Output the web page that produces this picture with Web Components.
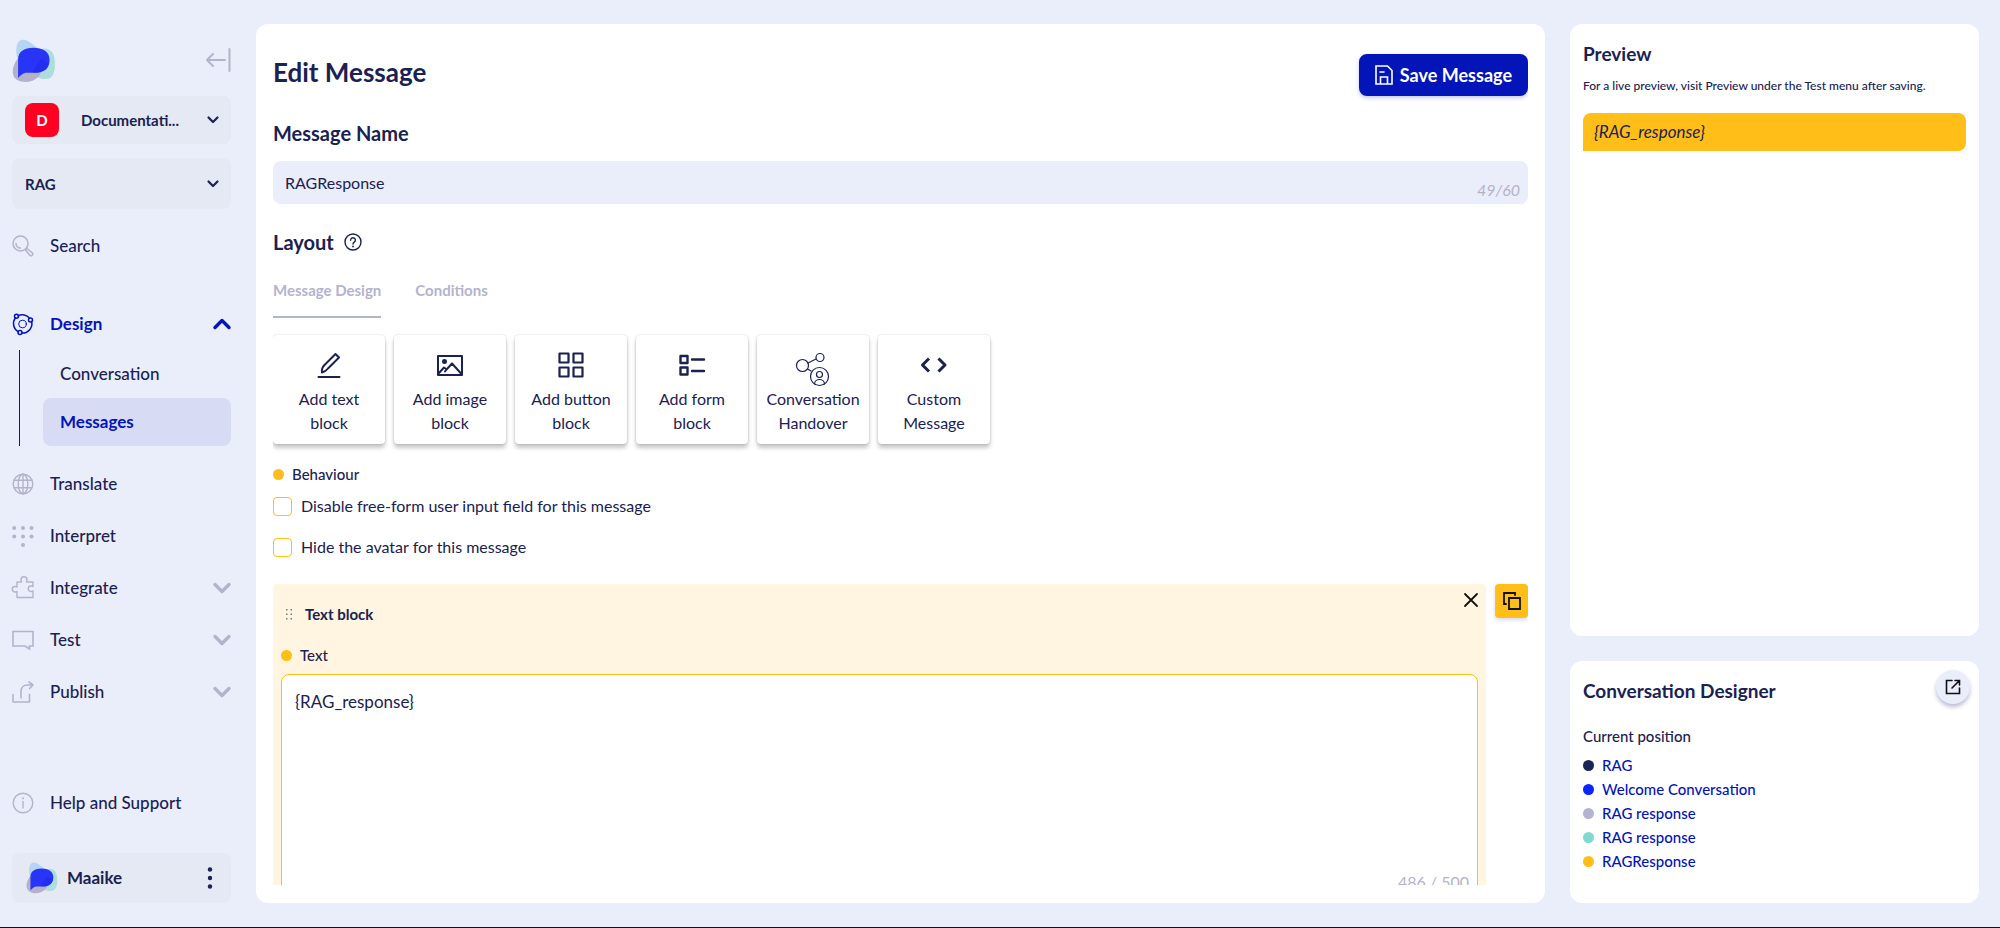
<!DOCTYPE html>
<html lang="en">
<head>
<meta charset="utf-8">
<title>Edit Message</title>
<style>
	:root {
		--page: #eaedfa;
		--field: #e4e9f3;
		--ink: #1b2150;
		--blue: #0314b8;
		--muted: #b4b3cc;
		--yellow: #ffbe18;
		--cream: #fff5e0;
	}

	body {
		margin: 0;
		background: var(--page);
		color: var(--ink);
		font: 500 16px/24px Lato, "Noto Sans", sans-serif;
	}
</style>
</head>
<body>
<message-editor></message-editor>

<script>
(function () {
	const define = (name, html) => {
		const template = document.createElement('template');
		template.innerHTML = html;

		window.customElements.define(name, class extends HTMLElement {
			constructor() {
				super();
				this.attachShadow({ mode: 'open' }).appendChild(template.content.cloneNode(true));
			}
		});
	};

	// name: [width, height, markup]
	const icons = {
		collapse: [26, 24, '<g stroke-width="2"><path d="M20 12H2M8 6l-6 6 6 6"/><path d="M24.500 1v22"/></g>'],
		down: [12, 8, '<path stroke-width="2.200" d="M1.500 1.500L6 6l4.500-4.500"/>'],
		chevron: [18, 12, '<path stroke-width="3.400" d="M2 2.500l7 7 7-7"/>'],
		search: [22, 22, '<g stroke-width="1.500"><circle cx="8.500" cy="8.500" r="7.500"/><path d="M4 8.500c0 2.500 2 4.500 4.500 4.500M13.500 15l1.500-1.500 5.500 4.500c1 1.500-1 3.500-2.500 2.500z"/></g>'],
		design: [22, 22, '<g stroke-width="1.500"><path d="M6 2.800a9.300 9.300 0 0 1 11.500 2.500M19.600 8.500A9.300 9.300 0 0 1 10 20M6.500 18.800A9.300 9.300 0 0 1 3.500 4.800"/><circle cx="10.500" cy="11" r="3.800" stroke-width="1"/><circle cx="4.500" cy="3.300" r="2"/><circle cx="18.500" cy="7" r="2"/><circle cx="8" cy="19.500" r="2"/></g>'],
		globe: [22, 22, '<g stroke-width="1.400"><circle cx="11" cy="11" r="9.800"/><ellipse cx="11" cy="11" rx="4.800" ry="9.800"/><path d="M11 1v20M2.500 7.200h17M2.500 14.800h17"/></g>'],
		dots: [22, 22, '<g fill="currentColor" stroke="none"><circle cx="2.200" cy="3" r="2"/><circle cx="11" cy="3" r="2"/><circle cx="19.500" cy="3" r="2"/><circle cx="2.200" cy="11.500" r="2"/><circle cx="11" cy="11.500" r="2"/><circle cx="19.500" cy="11.500" r="2"/><circle cx="11" cy="20" r="2"/></g>'],
		puzzle: [22, 22, '<path stroke-width="1.400" d="M5 5h4.500c0-1-.5-1.300-.5-2.200a3 3 0 0 1 6 0c0 .9-.5 1.200-.5 2.200H21v4.500c-1 0-1.300-.5-2-.5a2.700 2.700 0 0 0 0 5.500c.8 0 1-.5 2-.5v6.500H5v-6c-1 0-1.200.5-2 .5a2.700 2.700 0 0 1 0-5.500c.8 0 1 .5 2 .5z"/>'],
		chat: [22, 22, '<path stroke-width="1.600" stroke-linejoin="miter" d="M1 2.500h20V17h-3.500v3L13 17H1z"/>'],
		publish: [22, 22, '<g stroke-width="1.600"><path d="M1 13.500V21h16.500v-7.500M9 17v-6.500c0-4 2.500-6.500 6.500-6.500H20"/><path d="M17 1l4 3-3.500 3.500"/></g>'],
		info: [22, 22, '<g stroke-width="1.400"><circle cx="11" cy="11" r="9.800"/><path d="M11 9.500V16"/><path stroke-width="2" d="M11 6.200v.1"/></g>'],
		more: [6, 24, '<g fill="currentColor" stroke="none"><circle cx="3" cy="3.500" r="2.200"/><circle cx="3" cy="12" r="2.200"/><circle cx="3" cy="20.500" r="2.200"/></g>'],
		save: [18, 20, '<g stroke-width="1.600" stroke-linejoin="miter"><path d="M1 1h11.500L17 5.500V19H1zM5.500 19v-7h7v7M5 7h4"/></g>'],
		help: [18, 18, '<g stroke-width="1.400"><circle cx="9" cy="9" r="8"/><path d="M6.600 7.200a2.400 2.400 0 1 1 3.700 2c-.9.600-1.300 1-1.300 1.900"/><path stroke-width="1.800" d="M9 13.400v.1"/></g>'],
		pencil: [32, 32, '<g stroke-width="2"><path d="M5.500 28h21M9 23.500c-.5-3 .5-5.500 2.500-7.500l11-11 3.500 3.500-11 11c-2 2.500-4 3.500-6 4z"/></g>'],
		image: [32, 32, '<g stroke-width="2"><path d="M4 7h24v19H4z"/><path d="M5 24l5-5.500 2.500 2 5.500-6L27.500 25M12.500 20.500l-1.500 2"/><circle cx="10.500" cy="12.500" r="1.500" fill="currentColor"/></g>'],
		grid: [32, 32, '<g stroke-width="2.200"><path d="M4.500 4.500h9v9h-9zM18.500 4.500h9v9h-9zM4.500 18.500h9v9h-9zM18.500 18.500h9v9h-9z"/></g>'],
		form: [32, 32, '<g stroke-width="2.400"><path d="M4.500 7h7v7h-7zM4.500 18.500h7v7h-7zM16 10.500h12M16 22h12"/></g>'],
		handover: [32, 32, '<g stroke-width="1.200"><circle cx="5.500" cy="16.500" r="6"/><circle cx="23" cy="8.500" r="4"/><path d="M11 14l8-4M10.500 20l3.500 2"/><circle cx="22.500" cy="27.500" r="9"/><circle cx="22.500" cy="25.500" r="3"/><path d="M17.500 35c0-6 10-6 10 0"/></g>'],
		code: [32, 32, '<path stroke-width="3" stroke-linecap="butt" d="M11 9.500L4.500 16l6.500 6.500M20.500 9.500L27 16l-6.500 6.500"/>'],
		grip: [8, 12, '<g fill="currentColor" stroke="none"><path d="M1 1h1.500v1.500H1zM5.500 1H7v1.500H5.500zM1 5.500h1.500V7H1zM5.500 5.500H7V7H5.500zM1 10h1.500v1.500H1zM5.500 10H7v1.500H5.500z"/></g>'],
		close: [14, 14, '<path stroke-width="1.800" d="M1 1l12 12M13 1L1 13"/>'],
		copy: [18, 18, '<g stroke-width="1.800" stroke-linejoin="miter"><path d="M6 6h11v11H6z"/><path d="M3 12H1V1h11v2"/></g>'],
		open: [16, 16, '<g stroke-width="1.600" stroke-linejoin="miter"><path d="M7 1.500H1.500v13h13V9M10 1.500h4.500V6M14 2L7 9"/></g>']
	};

	class AppIcon extends HTMLElement {
		constructor() {
			super();
			this._root = this.attachShadow({ mode: 'open' });
		}

		connectedCallback() {
			const [width, height, markup] = icons[this.getAttribute('name')];
			this._root.innerHTML = `
      <style>
        :host { display: inline-flex; flex: none; }
        svg { overflow: visible; fill: none; stroke: currentColor; stroke-linecap: round; stroke-linejoin: round; }
      </style>
      <svg width="${width}" height="${height}" viewBox="0 0 ${width} ${height}" aria-hidden="true">${markup}</svg>
      `;
		}
	}

	window.customElements.define('app-icon', AppIcon);

	define('brand-logo', `
    <style>
      :host { display: block; flex: none; width: 44px; height: 44px; }
      svg { display: block; width: 100%; height: 100%; }
    </style>
    <svg viewBox="0 0 130 130" aria-hidden="true">
      <path fill="#b5d5f3" d="M13 26C16-2 36-4 56 12l28 22-64 30C12 50 12 38 13 26z"/>
      <path fill="#aedde0" d="M90 28c26-2 36 14 37 42 1 30-7 48-27 48-20 1-34-10-40-20z"/>
      <path fill="#b3b2ca" d="M16 58C4 76-2 96 5 110c9 18 35 20 55 13 14-5 24-16 26-25z"/>
      <path fill="#2935f6" d="M18 115V60c0-22 18-34 44-34 30 0 49 12 49 36 0 26-17 38-43 38H44c-12 0-18 8-26 15z"/>
      <path fill="#1a23e0" opacity=".4" d="M60 98l26-40 22 14c-4 18-18 28-40 28z"/>
    </svg>
  `);

	class PickerField extends HTMLElement {
		constructor() {
			super();
			this._root = this.attachShadow({ mode: 'open' });
		}

		connectedCallback() {
			this._root.innerHTML = `
      <style>
        :host { display: grid; align-items: center; background: var(--field); border-radius: 8px; }
        select {
          grid-area: 1 / 1; width: 100%; height: 48px; padding: 0 40px 0 13px; border: 0;
          appearance: none; background: none; color: inherit; font: 700 15px/24px Lato, sans-serif;
        }
        :host([badge]) select { padding-left: 69px; }
        :host(:not([badge])) select { height: 51px; }
        b {
          grid-area: 1 / 1; width: 34px; margin-left: 13px; background: #ff0022; border-radius: 8px;
          color: #fff; font: 700 15px/34px Lato, sans-serif; text-align: center;
        }
        app-icon { grid-area: 1 / 1; justify-self: end; margin-right: 12px; pointer-events: none; }
      </style>
      ${this.hasAttribute('badge') ? `<b>${this.getAttribute('badge')}</b>` : ''}
      <select aria-label="${this.getAttribute('label')}"><option>${this.getAttribute('value')}</option></select>
      <app-icon name="down"></app-icon>
      `;
		}
	}

	window.customElements.define('picker-field', PickerField);

	class NavItem extends HTMLElement {
		constructor() {
			super();
			this._root = this.attachShadow({ mode: 'open' });
		}

		connectedCallback() {
			this._root.innerHTML = `
      <style>
        :host { display: block; }
        a {
          display: flex; align-items: center; gap: 16px; height: 52px;
          color: inherit; font-size: 17px; text-decoration: none;
        }
        span { flex: 1; }
        app-icon { color: var(--muted); }
        :host([open]) a { color: var(--blue); font-weight: 700; }
        :host([open]) app-icon { color: var(--blue); }
        :host([open]) .arrow { transform: rotate(180deg); }
      </style>
      <a href="#">
        <app-icon name="${this.getAttribute('icon')}"></app-icon>
        <span><slot></slot></span>
        ${this.hasAttribute('expandable') ? '<app-icon class="arrow" name="chevron"></app-icon>' : ''}
      </a>
      `;
		}
	}

	window.customElements.define('nav-item', NavItem);

	define('nav-sub', `
    <style>
      :host { display: block; margin: 0 0 12px 7px; padding-left: 23px; border-left: 1px solid var(--blue); }
      ::slotted(a) {
        display: block; padding: 0 17px; border-radius: 8px;
        color: inherit; font-size: 17px; line-height: 48px; text-decoration: none;
      }
      ::slotted([aria-current]) { background: #d7dcf4; color: var(--blue); font-weight: 700; }
    </style>
    <slot></slot>
  `);

	define('side-bar', `
    <style>
      :host { display: flex; flex-direction: column; padding-top: 15px; min-height: 0; }
      header { display: flex; justify-content: space-between; align-items: flex-start; height: 44px; margin-bottom: 13px; }
      button { display: flex; padding: 0; border: 0; background: none; color: inherit; }
      header button { margin-top: 9px; color: var(--muted); }
      picker-field + picker-field { margin: 14px 0 11px; }
      .search { margin-bottom: 26px; }
      .help { margin-top: auto; }
      footer {
        display: flex; align-items: center; gap: 9px; height: 50px; margin-top: 24px; padding: 0 18px 0 14px;
        background: var(--field); border-radius: 8px; font-size: 17px; font-weight: 700;
      }
      footer brand-logo { width: 32px; height: 32px; }
      footer span { flex: 1; }
    </style>
    <header>
      <brand-logo></brand-logo>
      <button aria-label="Collapse menu"><app-icon name="collapse"></app-icon></button>
    </header>
    <picker-field badge="D" label="Workspace" value="Documentati..."></picker-field>
    <picker-field label="Scenario" value="RAG"></picker-field>
    <nav-item class="search" icon="search">Search</nav-item>
    <nav-item icon="design" expandable open>Design</nav-item>
    <nav-sub>
      <a href="#">Conversation</a>
      <a href="#" aria-current="page">Messages</a>
    </nav-sub>
    <nav-item icon="globe">Translate</nav-item>
    <nav-item icon="dots">Interpret</nav-item>
    <nav-item icon="puzzle" expandable>Integrate</nav-item>
    <nav-item icon="chat" expandable>Test</nav-item>
    <nav-item icon="publish" expandable>Publish</nav-item>
    <nav-item class="help" icon="info">Help and Support</nav-item>
    <footer>
      <brand-logo></brand-logo>
      <span>Maaike</span>
      <button aria-label="Account menu"><app-icon name="more"></app-icon></button>
    </footer>
  `);

	class BlockButton extends HTMLElement {
		constructor() {
			super();
			this._root = this.attachShadow({ mode: 'open' });
		}

		connectedCallback() {
			this._root.innerHTML = `
      <style>
        :host { display: block; width: 112px; }
        button {
          display: flex; flex-direction: column; align-items: center; gap: 6px;
          width: 100%; padding: 14px 8px 9px; border: 0; border-radius: 4px;
          background: #fff; box-shadow: 0 0 2px rgba(0, 0, 0, .2), 0 4px 4px rgba(0, 0, 0, .22);
          color: inherit; font: 400 16px/24px Lato, sans-serif;
        }
      </style>
      <button><app-icon name="${this.getAttribute('icon')}"></app-icon><span><slot></slot></span></button>
      `;
		}
	}

	window.customElements.define('block-button', BlockButton);

	define('dot-label', `
    <style>
      :host { display: flex; align-items: center; gap: 8px; font-size: 15px; line-height: 24px; }
      i { width: 11px; height: 11px; border-radius: 50%; background: var(--dot, var(--yellow)); }
      ::slotted(a) { color: var(--blue); text-decoration: none; }
    </style>
    <i></i><slot></slot>
  `);

	define('check-field', `
    <style>
      :host { display: flex; font-size: 16px; font-weight: 400; line-height: 24px; }
      label { display: flex; align-items: center; gap: 9px; }
      input {
        width: 19px; height: 19px; margin: 0; appearance: none;
        border: 1px solid var(--yellow); border-radius: 4px; background: #fff;
      }
      input:checked { background: var(--yellow); }
    </style>
    <label><input type="checkbox"><slot></slot></label>
  `);

	define('text-block', `
    <style>
      :host { display: flex; align-items: flex-start; gap: 9px; }
      section { flex: 1; padding: 18px 8px 8px; background: var(--cream); border-radius: 4px; }
      header { display: flex; align-items: center; gap: 12px; height: 24px; padding-left: 4px; margin-bottom: 17px; }
      h3 { flex: 1; margin: 0; font-size: 15px; font-weight: 700; }
      button { display: flex; padding: 0; border: 0; color: #111; }
      header button { align-self: flex-start; margin: -9px 0 0; background: none; }
      header app-icon { color: #777; }
      header button app-icon { color: #111; }
      .copy {
        justify-content: center; align-items: center; width: 33px; height: 34px;
        border-radius: 4px; background: var(--yellow); box-shadow: 0 2px 4px #d5d8ee;
      }
      .field { position: relative; margin-top: 7px; }
      textarea {
        display: block; box-sizing: border-box; width: 100%; height: 226px; padding: 15px 13px;
        border: 1px solid var(--yellow); border-radius: 8px; outline: 0; resize: none;
        color: inherit; font: 400 17px/24px Lato, sans-serif;
      }
      .count { position: absolute; right: 9px; bottom: 6px; color: var(--muted); font-size: 16px; font-weight: 400; }
    </style>
    <section>
      <header>
        <app-icon name="grip"></app-icon>
        <h3>Text block</h3>
        <button aria-label="Remove block"><app-icon name="close"></app-icon></button>
      </header>
      <dot-label><label for="text">Text</label></dot-label>
      <div class="field">
        <textarea id="text">{RAG_response}</textarea>
        <span class="count">486 / 500</span>
      </div>
    </section>
    <button class="copy" aria-label="Duplicate block"><app-icon name="copy"></app-icon></button>
  `);

	define('message-form', `
    <style>
      :host { display: block; min-height: 0; padding: 0 17px 18px; background: #fff; border-radius: 12px; }
      .scroll { height: 100%; overflow: hidden auto; scrollbar-width: none; }
      header { display: flex; justify-content: space-between; align-items: flex-start; padding-top: 30px; }
      h1 { margin: 0; font-size: 26px; line-height: 36px; }
      h2, .name-label { margin: 0; font-size: 20px; font-weight: 700; line-height: 24px; }
      .save {
        display: flex; align-items: center; gap: 7px; height: 42px; padding: 0 16px; border: 0; border-radius: 8px;
        background: var(--blue); box-shadow: 0 2px 4px #c5c9e8; color: #fff; font: 700 18px/24px Lato, sans-serif;
      }
      .name-label { display: block; margin: 25px 0 16px; }
      .name { display: grid; }
      .name input {
        grid-area: 1 / 1; box-sizing: border-box; width: 100%; height: 43px; padding: 0 80px 0 12px; border: 0; border-radius: 8px;
        background: var(--page); color: inherit; font: 400 16px/24px Lato, sans-serif;
      }
      .name span {
        grid-area: 1 / 1; place-self: end; margin-right: 8px; padding-bottom: 2px;
        color: var(--muted); font-size: 16px; font-style: italic; font-weight: 400;
      }
      .layout { display: flex; align-items: center; gap: 10px; margin: 26px 0 24px; }
      .tabs { display: flex; gap: 34px; margin-bottom: 17px; }
      .tabs button {
        padding: 0 0 14px; border: 0; border-bottom: 2px solid transparent; background: none;
        color: var(--muted); font: 700 15px/24px Lato, sans-serif;
      }
      .tabs [aria-selected=true] { border-color: var(--muted); }
      .blocks { display: flex; gap: 9px; margin-bottom: 18px; }
      check-field { margin: 8px 0 17px; }
      check-field + check-field { margin: 0 0 25px; }
    </style>
    <div class="scroll">
      <header>
        <h1>Edit Message</h1>
        <button class="save"><app-icon name="save"></app-icon>Save Message</button>
      </header>
      <label class="name-label" for="name">Message Name</label>
      <div class="name"><input id="name" type="text" value="RAGResponse"><span>49/60</span></div>
      <div class="layout"><h2>Layout</h2><app-icon name="help"></app-icon></div>
      <div class="tabs" role="tablist">
        <button role="tab" aria-selected="true">Message Design</button>
        <button role="tab" aria-selected="false">Conditions</button>
      </div>
      <div class="blocks">
        <block-button icon="pencil">Add text<br>block</block-button>
        <block-button icon="image">Add image<br>block</block-button>
        <block-button icon="grid">Add button<br>block</block-button>
        <block-button icon="form">Add form<br>block</block-button>
        <block-button icon="handover">Conversation<br>Handover</block-button>
        <block-button icon="code">Custom<br>Message</block-button>
      </div>
      <dot-label>Behaviour</dot-label>
      <check-field>Disable free-form user input field for this message</check-field>
      <check-field>Hide the avatar for this message</check-field>
      <text-block></text-block>
    </div>
  `);

	define('message-preview', `
    <style>
      :host { display: block; flex: 1; padding: 18px 13px; background: #fff; border-radius: 12px; }
      h2 { margin: 0 0 8px; font-size: 19px; line-height: 24px; }
      p { margin: 0 0 15px; font-size: 12px; line-height: 24px; }
      em { display: block; padding: 7px 11px; border-radius: 8px 8px 8px 0; background: var(--yellow); font-size: 17px; font-weight: 400; }
    </style>
    <h2>Preview</h2>
    <p>For a live preview, visit Preview under the Test menu after saving.</p>
    <em>{RAG_response}</em>
  `);

	define('conversation-position', `
    <style>
      :host { display: block; padding: 9px 13px 30px; background: #fff; border-radius: 12px; }
      header { display: flex; justify-content: space-between; margin: 0 -4px 20px 0; }
      h2 { margin: 9px 0 0; font-size: 19px; line-height: 24px; }
      button {
        display: flex; justify-content: center; align-items: center; width: 34px; height: 34px; padding: 0; border: 0;
        border-radius: 50%; background: var(--page); box-shadow: 0 3px 4px #bdbdd6; color: #111;
      }
      p { margin: 0 0 5px; font-size: 15px; line-height: 24px; }
    </style>
    <header>
      <h2>Conversation Designer</h2>
      <button aria-label="Open designer"><app-icon name="open"></app-icon></button>
    </header>
    <p>Current position</p>
    <dot-label style="--dot: #1b2554"><a href="#">RAG</a></dot-label>
    <dot-label style="--dot: #0a25ff"><a href="#">Welcome Conversation</a></dot-label>
    <dot-label style="--dot: #b4b3d0"><a href="#">RAG response</a></dot-label>
    <dot-label style="--dot: #80d9ce"><a href="#">RAG response</a></dot-label>
    <dot-label><a href="#">RAGResponse</a></dot-label>
  `);

	define('message-editor', `
    <style>
      :host {
        display: grid; grid-template: minmax(0, 1fr) / 219px minmax(0, 1fr) 409px; gap: 25px;
        box-sizing: border-box; height: 100vh; padding: 24px 21px 24px 12px; border-bottom: 1px solid #111;
      }
      aside { display: flex; flex-direction: column; gap: 25px; }
    </style>
    <side-bar></side-bar>
    <message-form></message-form>
    <aside>
      <message-preview></message-preview>
      <conversation-position></conversation-position>
    </aside>
  `);
})();
</script>
</body>
</html>
